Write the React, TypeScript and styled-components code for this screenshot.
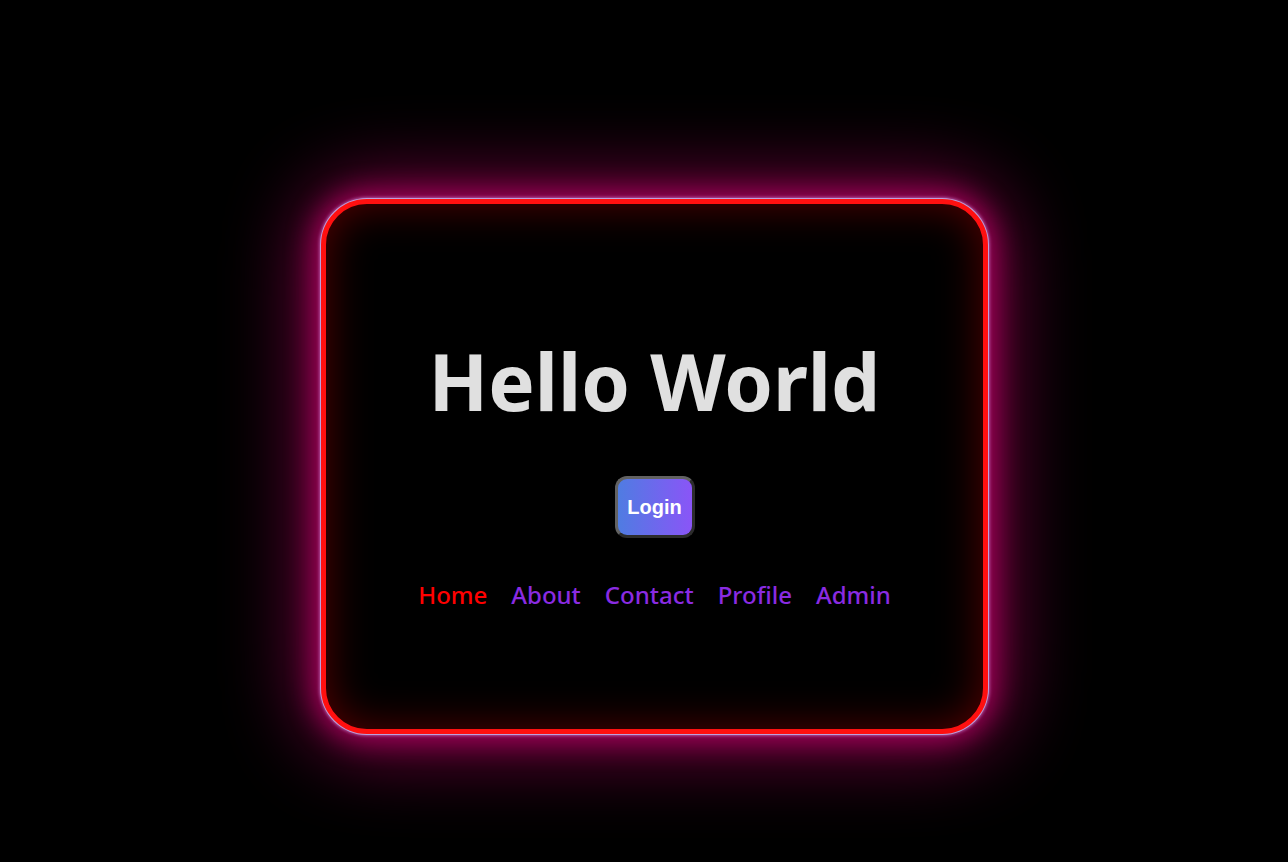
import React from "react";
import styled, { createGlobalStyle } from "styled-components";

const Global = createGlobalStyle`
  html, body { margin: 0; padding: 0; background: #000; }
  body { font-family: "Noto Sans", "Open Sans", sans-serif; }
`;

const Page = styled.div`
  min-height: 862px;
  box-sizing: border-box;
  padding: 199px 0 0 321px;
  background: #000;
`;

const Card = styled.div`
  width: 667px;
  height: 535px;
  box-sizing: border-box;
  border: 5px solid #ff1010;
  border-radius: 46px;
  background: #000;
  box-shadow:
    0 0 0 1px rgba(190, 170, 230, 0.9),
    0 0 3px 2px rgba(200, 130, 210, 0.6),
    0 0 26px 8px rgba(210, 0, 115, 0.6),
    0 0 80px 16px rgba(210, 0, 115, 0.6),
    inset 0 0 44px rgba(255, 0, 0, 0.34);
  display: flex;
  flex-direction: column;
  align-items: center;
  padding-top: 138px;
`;

const Title = styled.h1`
  margin: 0;
  font-family: "Noto Sans", sans-serif;
  font-weight: 700;
  font-size: 78px;
  line-height: 1;
  color: #e0e0e0;
`;

const LoginButton = styled.button`
  margin-top: 56px;
  width: 80px;
  height: 62px;
  box-sizing: border-box;
  border: 3px solid;
  border-color: #626262 #2c2c2c #2c2c2c #626262;
  border-radius: 12px;
  background: linear-gradient(90deg, #4f7ce2, #8a55f7);
  color: #fff;
  font-family: "Liberation Sans", Arial, sans-serif;
  font-weight: 700;
  font-size: 20px;
  padding: 0;
  cursor: pointer;
`;

const Nav = styled.nav`
  margin-top: 43px;
  display: flex;
  gap: 24px;
`;

const NavLink = styled.a<{ $active?: boolean }>`
  font-family: "Noto Sans", sans-serif;
  font-weight: 500;
  font-size: 24px;
  line-height: 1.2;
  text-decoration: none;
  color: ${(p) => (p.$active ? "#ff0000" : "#8a2be2")};
`;

const links = ["Home", "About", "Contact", "Profile", "Admin"];

export default function App() {
  return (
    <>
      <Global />
      <Page>
        <Card>
          <Title>Hello World</Title>
          <LoginButton>Login</LoginButton>
          <Nav>
            {links.map((l, i) => (
              <NavLink key={l} href="#" $active={i === 0}>
                {l}
              </NavLink>
            ))}
          </Nav>
        </Card>
      </Page>
    </>
  );
}
